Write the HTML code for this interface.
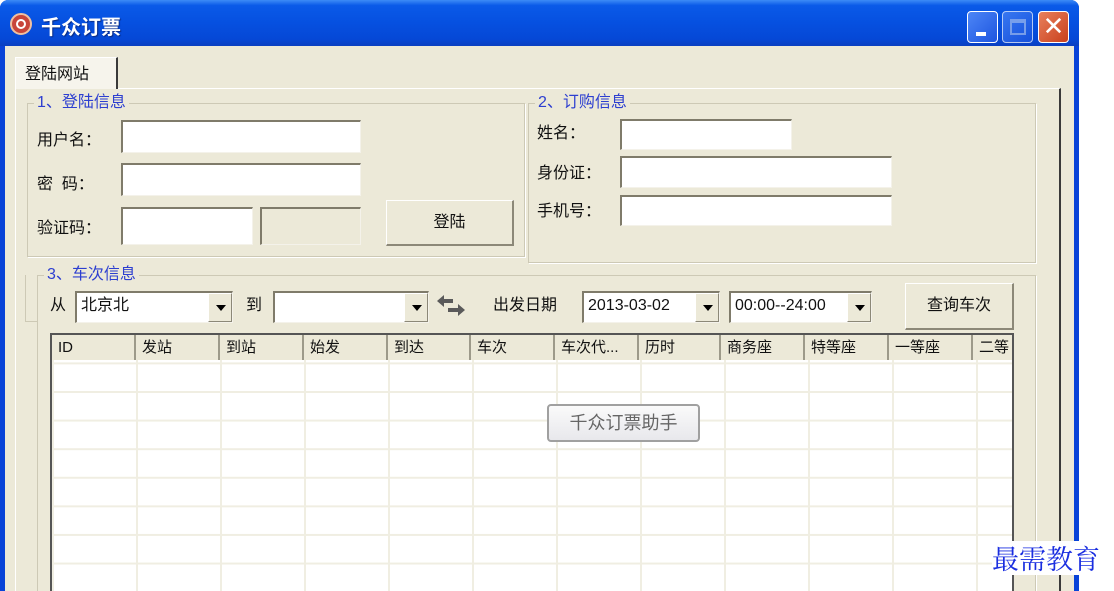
<!DOCTYPE html>
<html><head><meta charset="utf-8"><style>
*{margin:0;padding:0;box-sizing:border-box}
html,body{width:1114px;height:591px;overflow:hidden}
body{background:#fff;position:relative;font-family:"Liberation Sans","Noto Sans CJK SC",sans-serif;font-size:16px;color:#111}
.a{position:absolute}
.win{left:0;top:0;width:1079px;height:591px;background:#0843d8;border-radius:8px 8px 0 0}
.title{left:0;top:0;width:1079px;height:46px;border-radius:8px 8px 0 0;background:linear-gradient(#3d8cf6 0,#0a5ae8 12%,#0650e0 50%,#0548d6 85%,#0a3fc0 100%)}
.body{left:5px;top:46px;width:1069px;height:545px;background:#ece9d8}
.tbtn{top:11px;width:31px;height:32px;border:1px solid #fff;border-radius:4px;background:linear-gradient(135deg,#4d86f6,#1d55e0)}
.inp{background:#fff;border-top:2px solid #7f7b6a;border-left:2px solid #7f7b6a;border-right:1px solid #f4f2ea;border-bottom:1px solid #f4f2ea}
.grp{border:1px solid #cdc9b5;box-shadow:1px 1px 0 #fff}
.glab{background:#ece9d8;color:#2d3fd0;padding:0 3px;font-size:16px;line-height:18px}
.lab{font-size:16px;line-height:20px}
.btn{background:#ece9d8;border:1px solid #fff;border-right:2px solid #8c8878;border-bottom:2px solid #8c8878;text-align:center;font-size:16px}
.dd{width:24px;background:#ece9d8;border-left:1px solid #fff;border-top:1px solid #fff;border-right:1px solid #8c8878;border-bottom:1px solid #8c8878}
.dd:after{content:"";position:absolute;left:7px;top:11px;border:5px solid transparent;border-top:6px solid #000;border-bottom:0}
.hd{top:335px;height:25px;background:#ece9d8;border-right:2px solid #9d9a8a;font-size:15px;line-height:25px;padding-left:6px;overflow:hidden;white-space:nowrap}
</style></head><body>
<div class="a win"></div>
<div class="a title"></div>
<div class="a" style="left:10px;top:13px;width:22px;height:22px;border-radius:50%;background:#c8453a;border:2px solid #f0c0a0"></div>
<div class="a" style="left:16px;top:19px;width:10px;height:10px;border-radius:50%;border:2px solid #fff"></div>
<div class="a" style="left:41px;top:11px;color:#fff;font-weight:bold;font-size:20px;text-shadow:1px 1px 1px #0a2a80">千众订票</div>
<div class="a tbtn" style="left:967px"><div class="a" style="left:8px;top:20px;width:10px;height:4px;background:#fff"></div></div>
<div class="a tbtn" style="left:1002px;opacity:.7"><div class="a" style="left:7px;top:7px;width:16px;height:16px;border:2px solid #a8c0f0;border-top-width:4px"></div></div>
<div class="a tbtn" style="left:1038px;background:linear-gradient(135deg,#e8805c,#c9401c);color:#fff;font-size:26px;line-height:29px;text-align:center">✕</div>
<div class="a body"></div>
<div class="a" style="left:15px;top:88px;width:1046px;height:503px;border-top:1px solid #fff;border-left:1px solid #fff;border-right:2px solid #3a3a3a"></div>
<div class="a" style="left:15px;top:57px;width:103px;height:32px;background:#f6f4ec;border:1px solid #fff;border-right:2px solid #3a3a3a;border-bottom:none;font-size:16px;line-height:34px;padding-left:9px">登陆网站</div>
<div class="a grp" style="left:27px;top:103px;width:498px;height:154px"></div>
<div class="a glab" style="left:34px;top:94px">1、登陆信息</div>
<div class="a lab" style="left:37px;top:131px">用户名：</div>
<div class="a lab" style="left:37px;top:175px">密&nbsp;&nbsp;码：</div>
<div class="a lab" style="left:37px;top:219px">验证码：</div>
<div class="a inp" style="left:121px;top:120px;width:240px;height:33px"></div>
<div class="a inp" style="left:121px;top:163px;width:240px;height:33px"></div>
<div class="a inp" style="left:121px;top:207px;width:132px;height:38px"></div>
<div class="a inp" style="left:260px;top:207px;width:101px;height:38px;background:#ece9d8"></div>
<div class="a btn" style="left:386px;top:200px;width:128px;height:46px;line-height:44px">登陆</div>
<div class="a grp" style="left:528px;top:103px;width:508px;height:160px"></div>
<div class="a glab" style="left:535px;top:94px">2、订购信息</div>
<div class="a lab" style="left:537px;top:124px">姓名：</div>
<div class="a lab" style="left:537px;top:164px">身份证：</div>
<div class="a lab" style="left:537px;top:202px">手机号：</div>
<div class="a inp" style="left:620px;top:119px;width:172px;height:31px"></div>
<div class="a inp" style="left:620px;top:156px;width:272px;height:32px"></div>
<div class="a inp" style="left:620px;top:195px;width:272px;height:31px"></div>
<div class="a grp" style="left:37px;top:275px;width:999px;height:330px"></div>
<div class="a" style="left:25px;top:275px;width:13px;height:47px;border-left:1px solid #cdc9b5;border-bottom:1px solid #cdc9b5"></div>
<div class="a glab" style="left:44px;top:266px">3、车次信息</div>
<div class="a lab" style="left:50px;top:296px">从</div>
<div class="a inp" style="left:75px;top:291px;width:158px;height:32px;padding-left:4px;font-size:16px;line-height:26px">北京北<div class="a dd" style="right:0;top:0;height:29px"></div></div>
<div class="a lab" style="left:246px;top:296px">到</div>
<div class="a inp" style="left:273px;top:291px;width:156px;height:32px"><div class="a dd" style="right:0;top:0;height:29px"></div></div>
<svg class="a" style="left:435px;top:292px" width="32" height="28" viewBox="0 0 32 28"><path d="M2 9 L9 3 V7 H18 V11 H9 V15 Z" fill="#5a5a5a"/><path d="M30 18 L23 12 V16 H13 V20 H23 V24 Z" fill="#5a5a5a"/></svg>
<div class="a lab" style="left:493px;top:296px">出发日期</div>
<div class="a inp" style="left:582px;top:291px;width:138px;height:32px;padding-left:4px;font-size:16px;line-height:26px">2013-03-02<div class="a dd" style="right:0;top:0;height:29px"></div></div>
<div class="a inp" style="left:729px;top:291px;width:143px;height:32px;padding-left:4px;font-size:16px;line-height:26px">00:00--24:00<div class="a dd" style="right:0;top:0;height:29px"></div></div>
<div class="a btn" style="left:905px;top:283px;width:109px;height:47px;line-height:44px">查询车次</div>
<div class="a" style="left:50px;top:333px;width:964px;height:258px;background:#fff;border-left:2px solid #555;border-top:2px solid #555;border-right:2px solid #555;overflow:hidden">
<div style="position:absolute;left:0;top:0;width:100%;height:100%;background-image:linear-gradient(to right,#f0eee2 2px,transparent 2px),linear-gradient(#f0eee2 2px,transparent 2px);background-size:84px 28.6px,84px 28.6px;background-position:84px 0,0 56px"></div>
</div>
<div class="a hd" style="left:52px;width:84px">ID</div>
<div class="a hd" style="left:136px;width:84px">发站</div>
<div class="a hd" style="left:220px;width:84px">到站</div>
<div class="a hd" style="left:304px;width:84px">始发</div>
<div class="a hd" style="left:388px;width:83px">到达</div>
<div class="a hd" style="left:471px;width:84px">车次</div>
<div class="a hd" style="left:555px;width:84px">车次代...</div>
<div class="a hd" style="left:639px;width:82px">历时</div>
<div class="a hd" style="left:721px;width:84px">商务座</div>
<div class="a hd" style="left:805px;width:84px">特等座</div>
<div class="a hd" style="left:889px;width:84px">一等座</div>
<div class="a hd" style="left:973px;width:39px;border-right:none">二等</div>
<div class="a" style="left:547px;top:404px;width:153px;height:38px;border:2px solid #a0a0a0;border-radius:4px;background:linear-gradient(#fafafa,#e8e8ec);color:#666;font-size:18px;line-height:34px;text-align:center">千众订票助手</div>
<div class="a" style="left:1079px;top:0;width:35px;height:591px;background:#fff"></div>
<div class="a" style="left:992px;top:541px;color:#1a2ee0;font-family:'Noto Serif CJK SC',serif;font-size:27px;line-height:34px;background:#fff">最需教育</div>
</body></html>
